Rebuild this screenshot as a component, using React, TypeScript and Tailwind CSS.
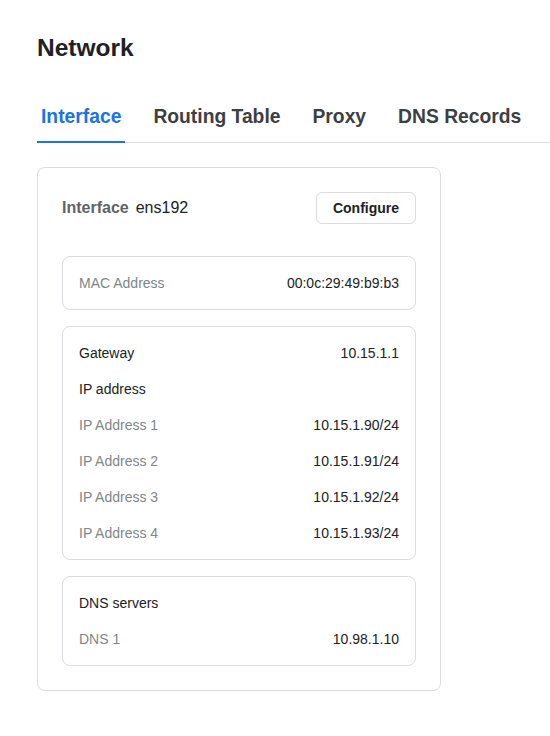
const font = "font-['Helvetica_Neue','Liberation_Sans',Arial,sans-serif]";

const tabs = ["Interface", "Routing Table", "Proxy", "DNS Records"];

function Row({ label, value, strong }: { label: string; value?: string; strong?: boolean }) {
  return (
    <div className="flex items-center justify-between text-sm leading-5">
      <span className={strong ? "text-[#202124]" : "text-[#80868b]"}>{label}</span>
      {value && <span className="text-[#202124]">{value}</span>}
    </div>
  );
}

function Box({ children }: { children: React.ReactNode }) {
  return (
    <div className="flex flex-col gap-4 rounded-lg border border-[#dadce0] px-4 py-4">{children}</div>
  );
}

export default function App() {
  return (
    <div className={`${font} min-h-screen bg-white pl-[37px] pt-8 text-[#202124]`}>
      <h1 className="text-[24.5px] font-bold leading-8 text-[#202124]">Network</h1>

      <div className="mt-[39px] flex gap-6 border-b border-[#dadce0]">
        {tabs.map((t, i) => (
          <div
            key={t}
            className={
              "-mb-px border-b-2 px-1 pb-[10px] text-[19.3px] font-semibold leading-7 " +
              (i === 0 ? "border-[#1a73e8] text-[#1a73e8]" : "border-transparent text-[#3c4043]")
            }
          >
            {t}
          </div>
        ))}
      </div>

      <div className="mt-6 w-[404px] rounded-lg border border-[#dadce0] p-6">
        <div className="mb-8 flex items-center justify-between">
          <div className="flex items-baseline gap-[7px] text-base">
            <span className="font-bold text-[#5f6368]">Interface</span>
            <span className="text-[#202124]">ens192</span>
          </div>
          <button className="h-8 w-[100px] rounded-md border border-[#dadce0] bg-white text-sm font-semibold text-[#202124]">
            Configure
          </button>
        </div>

        <div className="flex flex-col gap-4">
          <Box>
            <Row label="MAC Address" value="00:0c:29:49:b9:b3" />
          </Box>
          <Box>
            <Row label="Gateway" value="10.15.1.1" strong />
            <Row label="IP address" strong />
            <Row label="IP Address 1" value="10.15.1.90/24" />
            <Row label="IP Address 2" value="10.15.1.91/24" />
            <Row label="IP Address 3" value="10.15.1.92/24" />
            <Row label="IP Address 4" value="10.15.1.93/24" />
          </Box>
          <Box>
            <Row label="DNS servers" strong />
            <Row label="DNS 1" value="10.98.1.10" />
          </Box>
        </div>
      </div>
    </div>
  );
}
